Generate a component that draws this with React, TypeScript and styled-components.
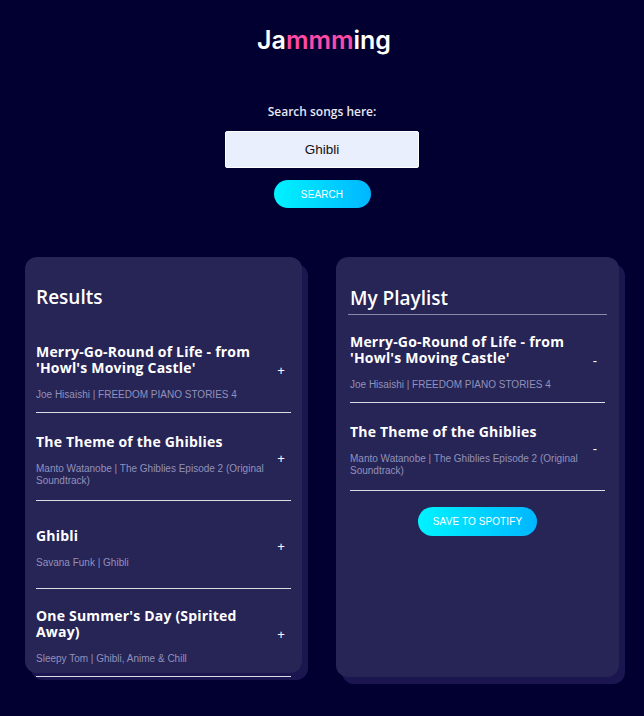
import React, { useState } from "react";
import styled, { createGlobalStyle } from "styled-components";

interface Track {
  id: string;
  name: string;
  artist: string;
  album: string;
}

const RESULTS: Track[] = [
  {
    id: "1",
    name: "Merry-Go-Round of Life - from 'Howl's Moving Castle'",
    artist: "Joe Hisaishi",
    album: "FREEDOM PIANO STORIES 4",
  },
  {
    id: "2",
    name: "The Theme of the Ghiblies",
    artist: "Manto Watanobe",
    album: "The Ghiblies Episode 2 (Original Soundtrack)",
  },
  { id: "3", name: "Ghibli", artist: "Savana Funk", album: "Ghibli" },
  {
    id: "4",
    name: "One Summer's Day (Spirited Away)",
    artist: "Sleepy Tom",
    album: "Ghibli, Anime & Chill",
  },
];

const GlobalStyle = createGlobalStyle`
  html, body {
    margin: 0;
    padding: 0;
    background: #010030;
  }
  * {
    box-sizing: border-box;
  }
`;

const TrackRow: React.FC<{ track: Track; sign: string }> = ({ track, sign }) => (
  <Row>
    <Info>
      <TrackName>{track.name}</TrackName>
      <TrackMeta>
        {track.artist} | {track.album}
      </TrackMeta>
    </Info>
    <ActionButton>{sign}</ActionButton>
  </Row>
);

export default function App() {
  const [term, setTerm] = useState("Ghibli");
  const playlist = RESULTS.slice(0, 2);

  return (
    <>
      <GlobalStyle />
      <Page>
        <Logo>
          Ja<Pink>mmm</Pink>ing
        </Logo>

        <SearchArea>
          <SearchLabel>Search songs here:</SearchLabel>
          <SearchInput value={term} onChange={(e) => setTerm(e.target.value)} />
          <GradientButton $width={97} $height={28}>
            SEARCH
          </GradientButton>
        </SearchArea>

        <Panels>
          <Card $width={277} $height={416} $pad={11}>
            <ResultsTitle>Results</ResultsTitle>
            {RESULTS.map((t) => (
              <TrackRow key={t.id} track={t} sign="+" />
            ))}
          </Card>

          <Card $width={283} $height={420} $pad={14}>
            <PlaylistTitle>My Playlist</PlaylistTitle>
            {playlist.map((t) => (
              <TrackRow key={t.id} track={t} sign="-" />
            ))}
            <SaveWrap>
              <GradientButton $width={119} $height={29}>
                SAVE TO SPOTIFY
              </GradientButton>
            </SaveWrap>
          </Card>
        </Panels>
      </Page>
    </>
  );
}

const Page = styled.div`
  min-height: 716px;
  background: #010030;
  color: #ffffff;
  font-family: "Open Sans", "Liberation Sans", sans-serif;
  padding-top: 24px;
`;

const Logo = styled.h1`
  margin: 0 0 0 4px;
  text-align: center;
  font-family: Inter, "Noto Sans", sans-serif;
  font-size: 25px;
  font-weight: 600;
  line-height: 32px;
  color: #ffffff;
`;

const Pink = styled.span`
  color: #fc4aa6;
`;

const SearchArea = styled.div`
  display: flex;
  flex-direction: column;
  align-items: center;
  margin-top: 48px;
`;

const SearchLabel = styled.label`
  font-size: 12px;
  font-weight: 600;
  line-height: 16px;
  color: #e8e8f4;
  margin-bottom: 11px;
`;

const SearchInput = styled.input`
  width: 194px;
  height: 37px;
  border: 1px solid #ffffff;
  border-radius: 2px;
  background: #e9effc;
  text-align: center;
  font-family: "Liberation Sans", Arial, sans-serif;
  font-size: 13.5px;
  color: #111111;
  outline: none;
  margin-bottom: 12px;
`;

const GradientButton = styled.button<{ $width: number; $height: number }>`
  width: ${(p) => p.$width}px;
  height: ${(p) => p.$height}px;
  border: none;
  border-radius: 999px;
  background: linear-gradient(90deg, #00f3ff 0%, #00b6ff 100%);
  color: #ffffff;
  font-family: "Liberation Sans", Arial, sans-serif;
  font-size: 10px;
  letter-spacing: 0.1px;
  cursor: pointer;
  padding: 0;
`;

const Panels = styled.div`
  display: flex;
  align-items: flex-start;
  gap: 34px;
  padding-left: 25px;
  margin-top: 49px;
`;

const Card = styled.div<{ $width: number; $height: number; $pad: number }>`
  width: ${(p) => p.$width}px;
  height: ${(p) => p.$height}px;
  background: #272456;
  border-radius: 12px;
  box-shadow: 6px 7px 0 #1c1650;
  padding: 28px ${(p) => p.$pad}px 0;
  display: flex;
  flex-direction: column;
`;

const ResultsTitle = styled.h2`
  margin: 0 0 16px;
  font-size: 19px;
  font-weight: 600;
  line-height: 24px;
  color: #ffffff;
`;

const PlaylistTitle = styled.h2`
  margin: 0 -2px;
  padding: 1px 2px 4px;
  font-size: 19px;
  font-weight: 600;
  line-height: 24px;
  color: #ffffff;
  border-bottom: 1px solid #8a88aa;
`;

const Row = styled.div`
  flex: none;
  height: 88px;
  display: flex;
  align-items: center;
  border-bottom: 1px solid #dcdce6;
  padding-top: 8px;
`;

const Info = styled.div`
  flex: 1;
  min-width: 0;
`;

const TrackName = styled.h3`
  margin: 0 0 13px;
  font-size: 14px;
  font-weight: 700;
  letter-spacing: 0.2px;
  line-height: 16px;
  color: #ffffff;
`;

const TrackMeta = styled.p`
  margin: 0;
  font-family: "Liberation Sans", Arial, sans-serif;
  font-size: 10px;
  line-height: 12px;
  color: #9192bb;
`;

const ActionButton = styled.button`
  flex: none;
  width: 20px;
  background: none;
  border: none;
  color: #ffffff;
  font-family: "Liberation Sans", Arial, sans-serif;
  font-size: 13px;
  padding: 0;
  margin-top: -5px;
  cursor: pointer;
`;

const SaveWrap = styled.div`
  display: flex;
  justify-content: center;
  padding-top: 16px;
`;
